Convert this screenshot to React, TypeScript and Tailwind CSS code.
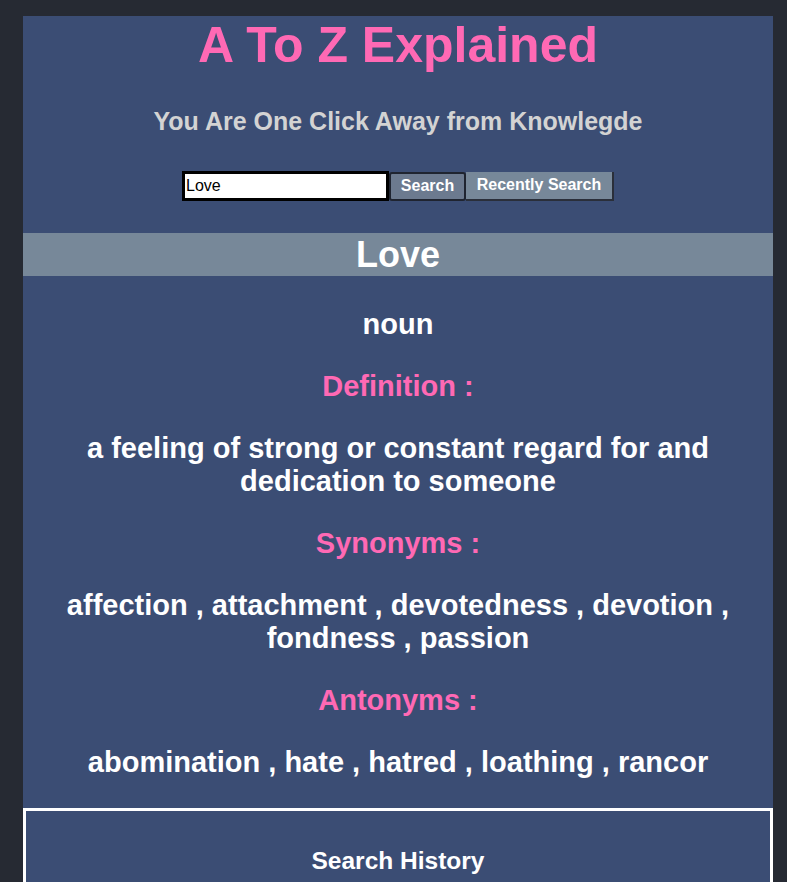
export default function App() {
  const synonyms = ["affection", "attachment", "devotedness", "devotion", "fondness", "passion"];
  const antonyms = ["abomination", "hate", "hatred", "loathing", "rancor"];

  return (
    <div className="min-h-screen bg-[#262a33] pt-4 font-['Liberation_Sans',Arial,sans-serif]">
      <div className="ml-[23px] w-[750px] bg-[#3b4d74] text-center">
        {/* Header */}
        <h1 className="text-[50px] font-bold leading-[56px] text-[#ff69b4] pt-[1px]">A To Z Explained</h1>
        <p className="mt-[34px] text-[25px] font-bold leading-[28px] text-[#d3d3d3]">
          You Are One Click Away from Knowlegde
        </p>
        <div className="mt-[36px] flex justify-center items-center">
          <input
            defaultValue="Love"
            className="w-[207px] h-[30px] border-[3px] border-black bg-white px-[1px] text-[16px] text-black outline-none"
          />
          <button className="w-[77px] h-[29px] bg-[#6c7a8f] border-2 border-[#1f2430] rounded-[3px] text-[16px] font-bold text-white leading-none">
            Search
          </button>
          <button className="w-[148px] h-[29px] bg-[#778899] border-r-2 border-b-2 border-[#2a2f3a] text-[16px] font-bold text-white leading-none">
            Recently Search
          </button>
        </div>

        {/* Word */}
        <div className="mt-[32px] h-[43px] bg-[#778899] flex items-center justify-center">
          <h2 className="text-[36px] font-bold text-white leading-none">Love</h2>
        </div>

        <div className="flex flex-col gap-[29px] pt-[32px] pb-[29px] px-10 text-[29px] font-bold leading-[33px] text-white">
          <p>noun</p>
          <p className="text-[#ff69b4]">Definition :</p>
          <p>a feeling of strong or constant regard for and dedication to someone</p>
          <p className="text-[#ff69b4]">Synonyms :</p>
          <p>{synonyms.join(" , ")}</p>
          <p className="text-[#ff69b4]">Antonyms :</p>
          <p>{antonyms.join(" , ")}</p>
        </div>
      </div>

      {/* History */}
      <div className="ml-[23px] w-[750px] h-[200px] bg-[#3b4d74] border-[3px] border-white text-center">
        <h3 className="mt-[32px] text-[24.5px] font-bold text-white">Search History</h3>
      </div>
    </div>
  );
}
